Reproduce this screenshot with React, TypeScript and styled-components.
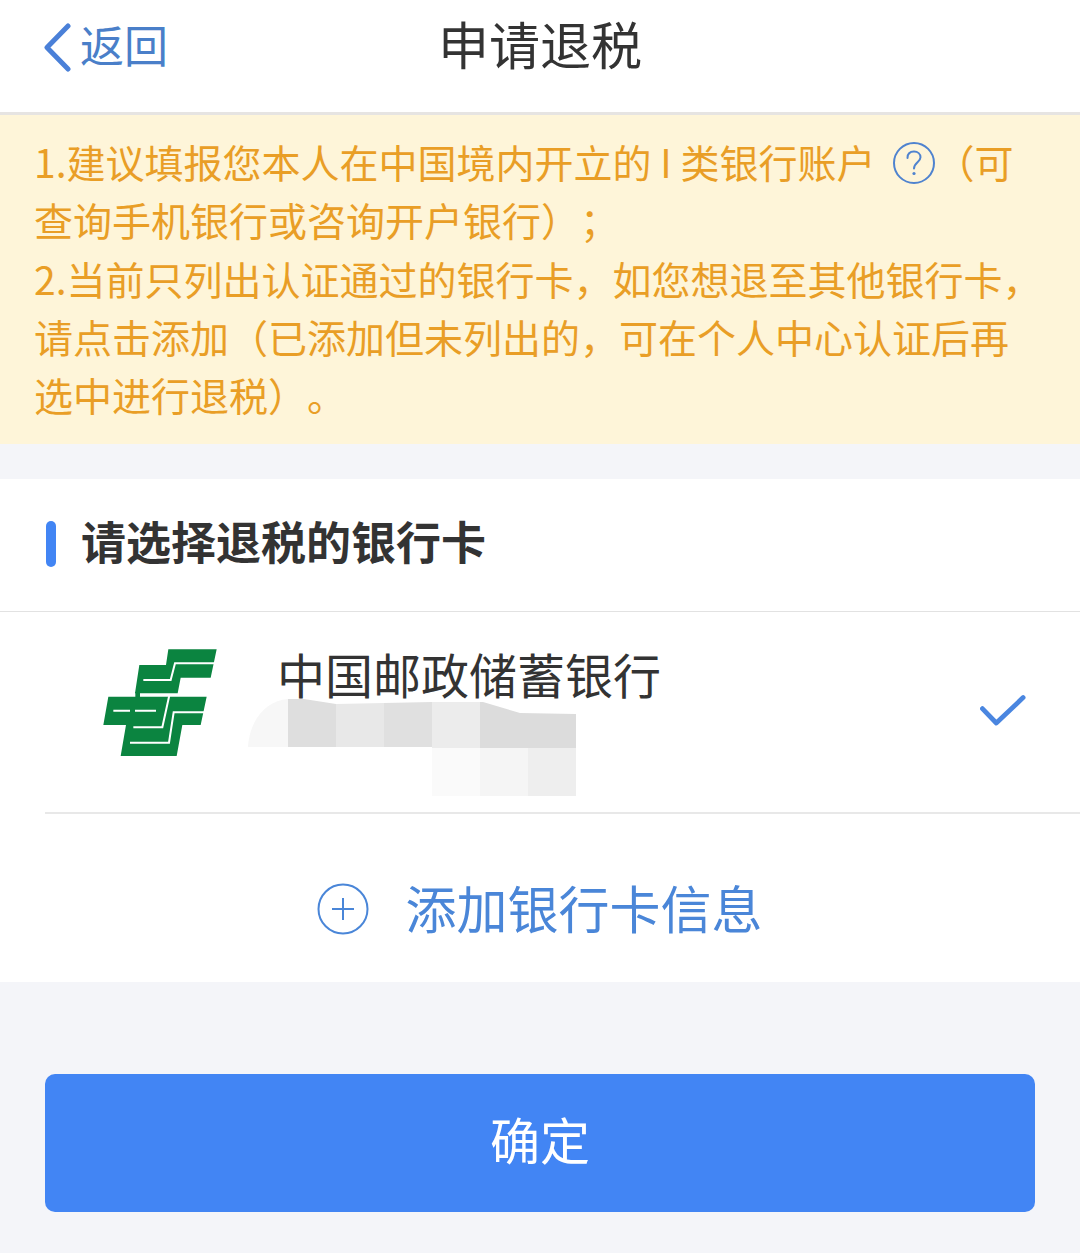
import styled, { createGlobalStyle } from 'styled-components'

const GlobalStyle = createGlobalStyle`
  html, body {
    margin: 0;
    padding: 0;
    background: #f4f5f9;
  }
  * {
    box-sizing: border-box;
  }
  body {
    font-family: "Noto Sans CJK SC", "Noto Sans", sans-serif;
  }
`

const tiles = [
  { col: 1, row: 1, wide: 40, shade: '#f7f7f7' },
  { col: 2, row: 1, wide: 48, shade: '#dedede' },
  { col: 3, row: 1, wide: 48, shade: '#e8e8e8' },
  { col: 4, row: 1, wide: 48, shade: '#e0e0e0' },
  { col: 5, row: 1, wide: 48, shade: '#ececec' },
  { col: 6, row: 1, wide: 48, shade: '#dcdcdc' },
  { col: 7, row: 1, wide: 48, shade: '#dcdcdc' },
  { col: 5, row: 2, wide: 48, shade: '#fafafa' },
  { col: 6, row: 2, wide: 48, shade: '#f5f5f5' },
  { col: 7, row: 2, wide: 48, shade: '#eeeeee' },
]

export default function App() {
  return (
    <Page>
      <GlobalStyle />
      <Header>
        <BackLink>
          <svg width="30" height="50" viewBox="0 0 30 50" fill="none">
            <path d="M26 4 L5 25.5 L26 47" stroke="#4a80d8" strokeWidth="5" strokeLinecap="round" strokeLinejoin="round" />
          </svg>
          <BackLabel>返回</BackLabel>
        </BackLink>
        <Title>申请退税</Title>
      </Header>

      <Notice>
        1.建议填报您本人在中国境内开立的 I 类银行账户
        <HelpIcon viewBox="0 0 42 42" fill="none">
          <circle cx="21" cy="21" r="20" stroke="#4f83cf" strokeWidth="2" />
          <path d="M14.5 16 C14.5 11.5 17.5 9.5 21 9.5 C24.8 9.5 27.5 12 27.5 15.2 C27.5 20 21 20.5 21 26.5" stroke="#4f83cf" strokeWidth="2" strokeLinecap="round" />
          <circle cx="21" cy="31.5" r="1.6" fill="#4f83cf" />
        </HelpIcon>
        （可<br />
        查询手机银行或咨询开户银行）；<br />
        2.当前只列出认证通过的银行卡，如您想退至其他银行卡，<br />
        请点击添加（已添加但未列出的，可在个人中心认证后再<br />
        选中进行退税）。
      </Notice>

      <Card>
        <SectionHead>
          <SectionMark />
          <SectionTitle>请选择退税的银行卡</SectionTitle>
        </SectionHead>

        <BankRow>
          <BankLogo viewBox="0 0 660 420">
            <polygon fill="#0b8440" points="265,58 410,58 392,143 302,143 293,190 165,190 178,105 258,105" />
            <polygon fill="#0b8440" points="85,200 380,200 362,285 307,285 290,378 122,378 138,285 70,285" />
            <rect fill="#0b8440" x="166" y="186" width="14" height="18" />
            <g fill="none" stroke="#fff" strokeWidth="6">
              <polyline points="415,100 285,100 272,150 190,150" />
              <polyline points="268,196 247,292 160,292" />
              <polyline points="385,247 281,247 267,338 150,338" />
              <path d="M100 242 H150 M165 242 H228" />
            </g>
          </BankLogo>
          <BankInfo>
            <BankName>中国邮政储蓄银行</BankName>
            <Mosaic>
              {tiles.map((t) => (
                <MosaicTile key={`${t.col}-${t.row}`} $col={t.col} $row={t.row} $wide={t.wide} $shade={t.shade} />
              ))}
            </Mosaic>
          </BankInfo>
          <CheckIcon viewBox="0 0 48 34" fill="none">
            <path d="M2.5 14 L17 29 L45 2.5" stroke="#4a86e0" strokeWidth="5" strokeLinecap="round" strokeLinejoin="round" />
          </CheckIcon>
        </BankRow>

        <AddRow>
          <svg width="52" height="52" viewBox="0 0 52 52" fill="none">
            <circle cx="26" cy="26" r="24.5" stroke="#4a86d8" strokeWidth="2" />
            <path d="M26 15 V37 M15 26 H37" stroke="#4a86d8" strokeWidth="2" />
          </svg>
          <AddLabel>添加银行卡信息</AddLabel>
        </AddRow>
      </Card>

      <Footer>
        <ConfirmButton>确定</ConfirmButton>
      </Footer>
    </Page>
  )
}

const Page = styled.div`
  width: 1080px;
  height: 1253px;
  overflow: hidden;
  background: #f4f5f9;
`

const Header = styled.header`
  height: 115px;
  background: #fff;
  border-bottom: 3px solid #e6e4e2;
  display: flex;
  align-items: center;
  justify-content: center;
  position: relative;
`

const BackLink = styled.div`
  position: absolute;
  left: 42px;
  top: 22px;
  display: flex;
  align-items: center;
  gap: 8px;
  font-size: 44px;
  line-height: 50px;
  color: #4a7fc9;
`

const BackLabel = styled.span`
  margin-top: -6px;
`

const Title = styled.h1`
  margin: 0 0 26px;
  font-size: 51px;
  font-weight: 400;
  line-height: 56px;
  color: #333;
`

const Notice = styled.div`
  height: 329px;
  padding: 17px 0 0 34px;
  background: #fef5d9;
  color: #e99e26;
  font-size: 39px;
  line-height: 58.3px;
  white-space: nowrap;
  text-spacing-trim: space-all;
`

const HelpIcon = styled.svg`
  display: inline-block;
  width: 42px;
  height: 42px;
  margin-left: 18px;
  vertical-align: -6px;
`

const Card = styled.section`
  margin-top: 35px;
  background: #fff;
`

const SectionHead = styled.div`
  height: 133px;
  padding-left: 46px;
  border-bottom: 1px solid #e2e2e2;
  display: flex;
  align-items: center;
  gap: 25px;
`

const SectionMark = styled.span`
  width: 10px;
  height: 46px;
  margin-top: -2px;
  border-radius: 5px;
  background: #4285f4;
`

const SectionTitle = styled.h2`
  margin: -8px 0 0;
  font-size: 45px;
  font-weight: 700;
  line-height: 56px;
  color: #333;
`

const BankRow = styled.div`
  height: 202px;
  margin-left: 45px;
  border-bottom: 2px solid #e8e8e8;
  display: flex;
  align-items: flex-start;
  position: relative;
`

const BankLogo = styled.svg`
  width: 220px;
  height: 140px;
  margin: 18px 0 0 35px;
  flex: none;
`

const BankInfo = styled.div`
  flex: 1;
  margin-left: -23px;
  padding-top: 33px;
`

const BankName = styled.div`
  font-size: 48px;
  line-height: 56px;
  color: #333;
`

const Mosaic = styled.div`
  display: grid;
  grid-template-columns: 40px repeat(6, 48px);
  grid-template-rows: 49px 48px;
  width: 328px;
  margin: -2px 0 0 -29px;
  clip-path: path('M0 48 C2 20 18 2 40 0 L56 0 L88 5 L184 3 L235 3 L272 14 L328 15 L328 97 L184 97 L184 48 Z');
`

const MosaicTile = styled.span<{ $col: number; $row: number; $wide: number; $shade: string }>`
  grid-column: ${({ $col }) => $col};
  grid-row: ${({ $row }) => $row};
  width: ${({ $wide }) => $wide}px;
  background: ${({ $shade }) => $shade};
`

const CheckIcon = styled.svg`
  position: absolute;
  left: 935px;
  top: 83px;
  width: 46px;
  height: 33px;
`

const AddRow = styled.div`
  height: 168px;
  display: flex;
  align-items: center;
  justify-content: center;
  gap: 36px;
  padding: 22px 0 0 0;
`

const AddLabel = styled.span`
  margin-top: -4px;
  font-size: 51px;
  line-height: 60px;
  color: #4a86d8;
`

const Footer = styled.div`
  padding: 92px 45px 0;
`

const ConfirmButton = styled.button`
  display: block;
  width: 100%;
  height: 138px;
  padding: 0 0 10px;
  border: 0;
  border-radius: 10px;
  background: #4285f4;
  color: #fff;
  font-family: inherit;
  font-size: 50px;
`
